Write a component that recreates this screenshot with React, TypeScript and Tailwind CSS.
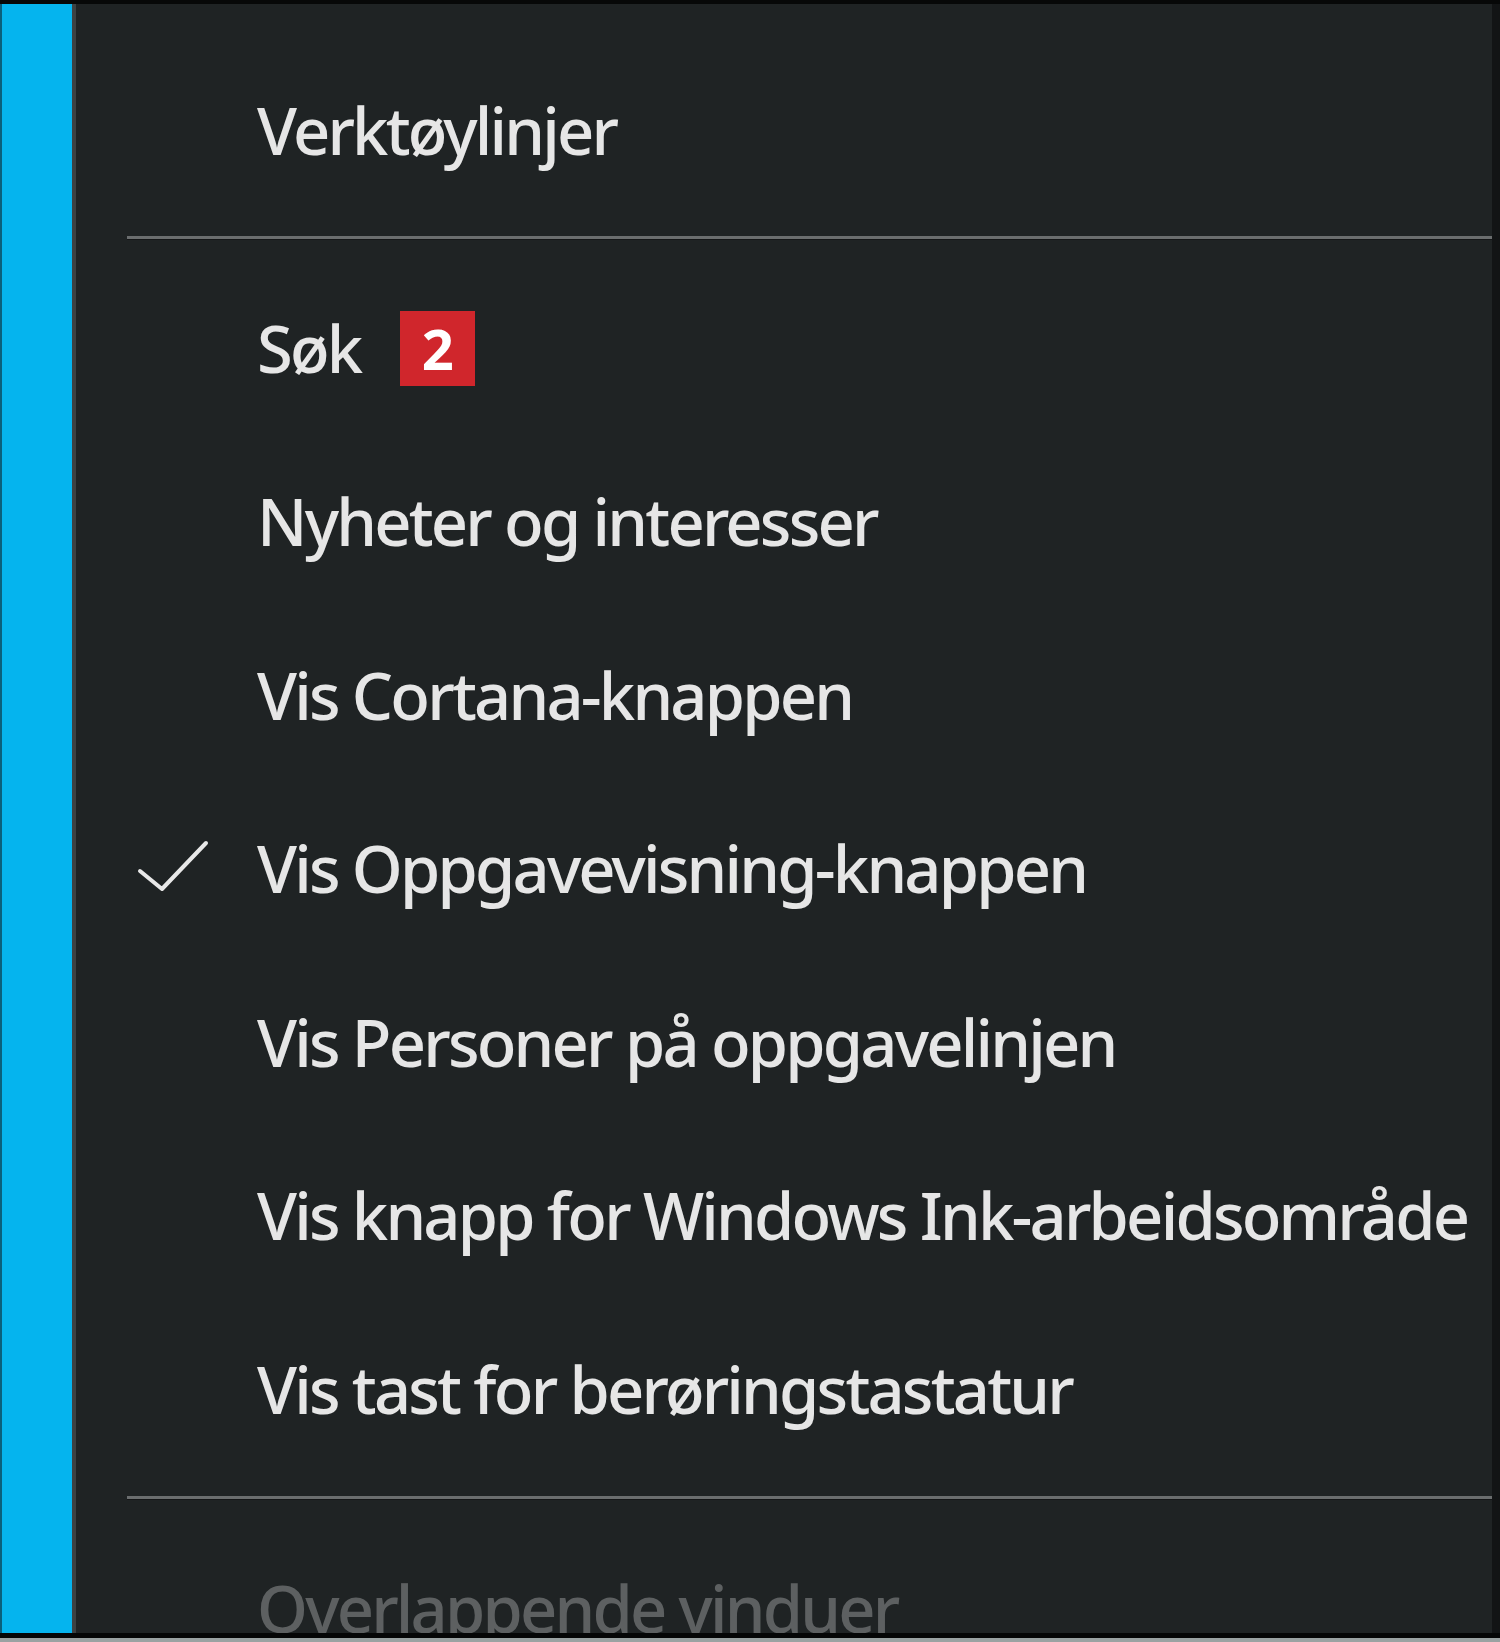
import React from "react";

const font = { fontFamily: '"Noto Sans", "Open Sans", sans-serif' };

function Check() {
  return (
    <svg width="80" height="60" viewBox="0 0 80 60" className="absolute left-[54px] top-1/2 -translate-y-1/2">
      <polyline
        points="10,32 32,50 76,4"
        fill="none"
        stroke="#e8e8e8"
        strokeWidth="4"
        strokeLinecap="round"
        strokeLinejoin="round"
      />
    </svg>
  );
}

function Item({
  label,
  checked,
  disabled,
  badge,
}: {
  label: string;
  checked?: boolean;
  disabled?: boolean;
  badge?: string;
}) {
  return (
    <div className="relative flex h-[173.5px] shrink-0 items-center pl-[181px]">
      {checked && <Check />}
      <span
        className={
          "whitespace-nowrap text-[65px] font-medium leading-none tracking-[-0.043em] " +
          (disabled ? "text-[#5d6061]" : "text-[#e6e6e6]")
        }
      >
        {label}
      </span>
      {badge && (
        <span className="ml-[40px] flex h-[75px] w-[75px] items-center justify-center bg-[#d0262c] text-[56px] font-bold leading-none text-white">
          {badge}
        </span>
      )}
    </div>
  );
}

function Separator() {
  return <div className="ml-[51px] h-[4px] shrink-0 border-b border-[#141617] bg-[#6a6d6e]" />;
}

export default function App() {
  return (
    <div className="flex h-[1642px] w-[1500px] flex-col overflow-hidden bg-[#0b0c0c]" style={font}>
      <div className="h-[4px] shrink-0 bg-[#070808]" />
      <div className="flex min-h-0 flex-1">
        <div className="w-[72px] shrink-0 border-l-2 border-[#0a5f7c] bg-[#05b4ee]" />
        <div className="w-[4px] shrink-0 bg-[#3d4243]" />
        <div className="flex min-w-0 flex-1 flex-col overflow-hidden bg-[#1f2324] pt-[40px]">
          <Item label="Verktøylinjer" />
          <div className="h-[18px] shrink-0" />
          <Separator />
          <div className="h-[22px] shrink-0" />
          <Item label="Søk" badge="2" />
          <Item label="Nyheter og interesser" />
          <Item label="Vis Cortana-knappen" />
          <Item label="Vis Oppgavevisning-knappen" checked />
          <Item label="Vis Personer på oppgavelinjen" />
          <Item label="Vis knapp for Windows Ink-arbeidsområde" />
          <Item label="Vis tast for berøringstastatur" />
          <div className="h-[20px] shrink-0" />
          <Separator />
          <div className="h-[22px] shrink-0" />
          <Item label="Overlappende vinduer" disabled />
        </div>
        <div className="w-[8px] shrink-0 bg-[#121415]" />
      </div>
      <div className="h-[5px] shrink-0 bg-[#050606]" />
      <div className="h-[4px] shrink-0 bg-[#9aa2a2]" />
    </div>
  );
}
